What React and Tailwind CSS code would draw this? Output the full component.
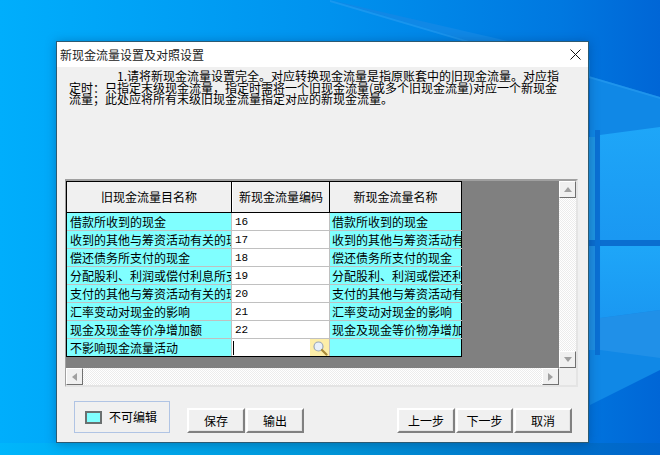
const rows = [
  ["借款所收到的现金", "16", "借款所收到的现金"],
  ["收到的其他与筹资活动有关的现金", "17", "收到的其他与筹资活动有关的现金"],
  ["偿还债务所支付的现金", "18", "偿还债务所支付的现金"],
  ["分配股利、利润或偿付利息所支付的现金", "19", "分配股利、利润或偿还利息所支付的现金"],
  ["支付的其他与筹资活动有关的现金", "20", "支付的其他与筹资活动有关的现金"],
  ["汇率变动对现金的影响", "21", "汇率变动对现金的影响"],
  ["现金及现金等价净增加额", "22", "现金及现金等价物净增加额"],
];

const note =
  "1.请将新现金流量设置完全。对应转换现金流量是指原账套中的旧现金流量。对应指定时\uFF1A只指定末级现金流量\uFF0C指定时需将一个旧现金流量(或多个旧现金流量)对应一个新现金流量\uFF1B此处应将所有末级旧现金流量指定对应的新现金流量。";

const btn =
  "h-[25px] flex items-center justify-center bg-[#f0f0f0] text-[12px] text-black border-2 border-t-white border-l-white border-r-[#808080] border-b-[#808080] shadow-[inset_-1px_-1px_0_#e4e4e4]";

function Wallpaper() {
  return (
    <svg className="absolute inset-0" width="660" height="455" viewBox="0 0 660 455">
      <defs>
        <linearGradient id="bg" x1="0" y1="0" x2="1" y2="0">
          <stop offset="0" stopColor="#00aefc" />
          <stop offset="0.5" stopColor="#0092ee" />
          <stop offset="0.85" stopColor="#0078e0" />
          <stop offset="1" stopColor="#0066d6" />
        </linearGradient>
        <linearGradient id="bot" x1="0" y1="0" x2="1" y2="0">
          <stop offset="0" stopColor="#00b6fc" />
          <stop offset="0.5" stopColor="#0096d8" />
          <stop offset="0.85" stopColor="#0070c8" />
          <stop offset="1" stopColor="#0064cc" />
        </linearGradient>
        <linearGradient id="pane" x1="0" y1="0" x2="0" y2="1">
          <stop offset="0" stopColor="#1ea6f8" />
          <stop offset="1" stopColor="#1a98f2" />
        </linearGradient>
      </defs>
      <rect width="660" height="455" fill="url(#bg)" />
      <polygon points="330,0 660,97 660,370 590,405 590,60" fill="#1088e6" />
      <polygon points="330,0 660,97 660,99 330,2" fill="#2a9cf0" opacity="0.6" />
      <rect x="588" y="240" width="72" height="6" fill="#0a6ed0" />
      <rect x="595" y="130" width="5" height="225" fill="#0a70d4" />
      <polygon points="600,135 660,127 660,240 600,240" fill="url(#pane)" />
      <polygon points="600,246 660,246 660,310 600,318" fill="url(#pane)" />
      <polygon points="600,318 660,310 660,358 600,350" fill="#2090e8" />
      <rect x="588" y="137" width="7" height="103" fill="#1e96e4" />
      <rect x="588" y="246" width="7" height="104" fill="#1e90e4" />
      <rect y="443" width="660" height="12" fill="url(#bot)" />
    </svg>
  );
}

function Magnifier() {
  return (
    <svg width="16" height="16" viewBox="0 0 16 16">
      <circle cx="6.5" cy="6.5" r="4.5" fill="#e8f0fa" stroke="#9aa6b8" strokeWidth="1.2" />
      <path d="M10 10l4.5 4.5" stroke="#a98a3a" strokeWidth="2.2" strokeLinecap="round" />
    </svg>
  );
}

function Arrow({ dir }) {
  const pts = { up: "0,5 8,5 4,0", down: "0,0 8,0 4,5", left: "5,0 5,8 0,4", right: "0,0 0,8 5,4" }[dir];
  const vertical = dir === "up" || dir === "down";
  return (
    <svg width={vertical ? 8 : 5} height={vertical ? 5 : 8} viewBox={vertical ? "0 0 8 5" : "0 0 5 8"}>
      <polygon points={pts} fill="#a0a0a0" />
    </svg>
  );
}

const sbBtn =
  "w-[17px] h-[17px] flex items-center justify-center bg-[#f0f0f0] border border-t-white border-l-white border-r-[#707070] border-b-[#707070] shrink-0";
const dither =
  "bg-[#f6f6f6] bg-[repeating-conic-gradient(#ffffff_0_25%,#ececec_0_50%)] bg-[length:2px_2px]";

export default function App() {
  return (
    <div
      className="relative w-[660px] h-[455px] overflow-hidden"
      style={{ fontFamily: '"Noto Sans CJK SC", "Liberation Sans", sans-serif' }}
    >
      <Wallpaper />
      <div className="absolute left-[56px] top-[41px] w-[533px] h-[402px] flex flex-col bg-[#f0f0f0] border border-[#2c5a72] text-black shadow-[0_1px_10px_rgba(0,40,90,0.35)]">
        <div className="h-[25px] shrink-0 bg-white flex items-center justify-between pl-[3px] pr-[7px] text-[12px] text-[#222]">
          <span>新现金流量设置及对照设置</span>
          <svg width="11" height="11" viewBox="0 0 11 11">
            <path d="M0.5 0.5l10 10M10.5 0.5l-10 10" stroke="#111" strokeWidth="1" />
          </svg>
        </div>

        <div className="h-[112px] shrink-0 pl-[12px] pr-[26px] pt-[3px] text-[12px] leading-[11.7px]">
          <p className="indent-[48px]">{note}</p>
        </div>

        <div className="ml-[8px] w-[513px] h-[208px] shrink-0 flex flex-col border-2 border-l border-t-[#a0a0a0] border-l-[#a0a0a0] border-r-[#e4e4e4] border-b-[#e4e4e4] text-[12px]">
          <div className="flex h-[187px] shrink-0">
            <div className="flex-1 bg-[#808080] flex items-start">
              <div className="w-[396px] border-t border-l border-b border-black bg-[#c0c0c0]">
                <div className="flex h-[31px] border-b border-black bg-[#f0f0f0]">
                  <div className="w-[165px] flex items-center justify-center border-r border-black">旧现金流量目名称</div>
                  <div className="w-[98px] flex items-center justify-center border-r border-black border-l border-l-white">新现金流量编码</div>
                  <div className="flex-1 flex items-center justify-center border-r border-black">新现金流量名称</div>
                </div>
                {rows.map((r) => (
                  <div key={r[1]} className="flex h-[18px] border-b border-[#c0c0c0]">
                    <div className="w-[164px] mr-px bg-[#80ffff] overflow-hidden whitespace-nowrap pl-[3px] leading-[17px]">{r[0]}</div>
                    <div className="w-[97px] mr-px bg-white pl-[3px] leading-[18px] text-[11px]" style={{ fontFamily: '"Liberation Mono", monospace' }}>{r[1]}</div>
                    <div className="flex-1 bg-[#80ffff] overflow-hidden whitespace-nowrap pl-[2px] leading-[17px] border-r border-black">{r[2]}</div>
                  </div>
                ))}
                <div className="flex h-[17px]">
                  <div className="w-[164px] mr-px bg-[#80ffff] pl-[3px] leading-[17px]">不影响现金流量活动</div>
                  <div className="w-[97px] mr-px bg-white flex items-center justify-between">
                    <span className="w-px h-[14px] bg-black ml-px" />
                    <span className="w-[19px] h-[17px] bg-[#fdeea8] flex items-center justify-center">
                      <Magnifier />
                    </span>
                  </div>
                  <div className="flex-1 bg-[#80ffff] border-r border-black" />
                </div>
              </div>
            </div>
            <div className={`w-[17px] flex flex-col justify-between ${dither}`}>
              <div className={sbBtn}><Arrow dir="up" /></div>
              <div className={sbBtn}><Arrow dir="down" /></div>
            </div>
          </div>
          <div className="flex h-[17px] shrink-0">
            <div className={`flex-1 flex justify-between ${dither}`}>
              <div className={sbBtn}><Arrow dir="left" /></div>
              <div className={sbBtn}><Arrow dir="right" /></div>
            </div>
            <div className="w-[17px] bg-[#f0f0f0]" />
          </div>
        </div>

        <div className="flex items-end pl-[17px] pr-[16px] mt-[14px]">
          <div className="w-[96px] h-[32px] flex items-center gap-[7px] pl-[10px] border border-[#b0c4e4] text-[12px]">
            <span className="w-[17px] h-[13px] bg-[#80ffff] border-2 border-[#6a7070]" />
            不可编辑
          </div>
          <div className="flex gap-[1px] ml-[17px]">
            <button className={`${btn} w-[58px]`}>保存</button>
            <button className={`${btn} w-[58px]`}>输出</button>
          </div>
          <div className="flex gap-[1px] ml-auto">
            <button className={`${btn} w-[58px]`}>上一步</button>
            <button className={`${btn} w-[57px]`}>下一步</button>
            <button className={`${btn} w-[58px]`}>取消</button>
          </div>
        </div>
      </div>
    </div>
  );
}
